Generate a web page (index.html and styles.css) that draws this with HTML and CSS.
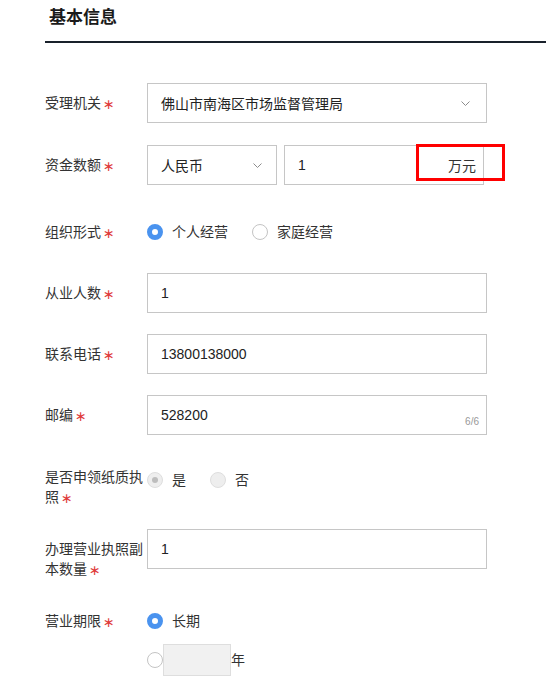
FILE: index.html
```html
<!DOCTYPE html>
<html lang="zh-CN">
<head>
    <meta charset="UTF-8">
    <meta name="viewport" content="width=device-width, initial-scale=1.0">
    <title>基本信息</title>
    <link rel="stylesheet" href="styles.css">
</head>
<body>
    <div class="page">
        <div class="section-head">
            <h2 class="section-title">基本信息</h2>
        </div>

        <form class="form">
            <div class="form-item">
                <label class="form-label">受理机关<span class="req">∗</span></label>
                <div class="select select--wide">
                    <span>佛山市南海区市场监督管理局</span>
                    <svg class="chevron" viewBox="0 0 9 5"><polyline points="0.5,0.5 4.5,4.5 8.5,0.5"/></svg>
                </div>
            </div>

            <div class="form-item form-item--money">
                <label class="form-label">资金数额<span class="req">∗</span></label>
                <div class="select select--currency">
                    <span>人民币</span>
                    <svg class="chevron" viewBox="0 0 9 5"><polyline points="0.5,0.5 4.5,4.5 8.5,0.5"/></svg>
                </div>
                <div class="input input--amount">
                    <span>1</span>
                    <span class="suffix">万元</span>
                    <div class="highlight"></div>
                </div>
            </div>

            <div class="form-item form-item--tight">
                <label class="form-label">组织形式<span class="req">∗</span></label>
                <div class="radios">
                    <div class="radio-option"><span class="radio is-checked"></span>个人经营</div>
                    <div class="radio-option"><span class="radio"></span>家庭经营</div>
                </div>
            </div>

            <div class="form-item form-item--tight">
                <label class="form-label">从业人数<span class="req">∗</span></label>
                <div class="input input--wide">1</div>
            </div>

            <div class="form-item form-item--tight">
                <label class="form-label">联系电话<span class="req">∗</span></label>
                <div class="input input--wide">13800138000</div>
            </div>

            <div class="form-item">
                <label class="form-label">邮编<span class="req">∗</span></label>
                <div class="input input--wide input--count">
                    528200
                    <span class="count">6/6</span>
                </div>
            </div>

            <div class="form-item">
                <label class="form-label">是否申领纸质执<br>照<span class="req">∗</span></label>
                <div class="radios radios--low">
                    <div class="radio-option"><span class="radio is-disabled is-checked"></span>是</div>
                    <div class="radio-option"><span class="radio is-disabled"></span>否</div>
                </div>
            </div>

            <div class="form-item">
                <label class="form-label">办理营业执照副<br>本数量<span class="req">∗</span></label>
                <div class="input input--wide">1</div>
            </div>

            <div class="form-item">
                <label class="form-label">营业期限<span class="req">∗</span></label>
                <div class="radios radios--stack">
                    <div class="radio-option"><span class="radio is-checked"></span>长期</div>
                    <div class="radio-option radio-option--years">
                        <span class="radio"></span>
                        <span class="years-box"></span>年
                    </div>
                </div>
            </div>
        </form>
    </div>
</body>
</html>
```

FILE: styles.css
```css
body {
    margin: 0;
    font-family: "Liberation Sans", "Noto Sans CJK SC", sans-serif;
    font-size: 14px;
    color: #333;
    background-color: #fff;
}
.page {
    padding-left: 45px;
}
.section-head {
    padding: 6px 0 11px 4px;
    border-bottom: 2px solid #19212b;
}
.section-title {
    margin: 0;
    font-size: 17px;
    font-weight: bold;
    line-height: 24px;
    color: #1b1b1b;
}
.form {
    padding-top: 40px;
}
.form-item {
    display: flex;
    align-items: flex-start;
    margin-bottom: 22px;
}
.form-item--money {
    margin-bottom: 27px;
}
.form-item--tight {
    margin-bottom: 21px;
}
.form-label {
    width: 102px;
    flex-shrink: 0;
    padding-top: 10px;
    line-height: 20px;
    color: #333;
}
.req {
    display: inline-block;
    height: 12px;
    margin-left: 2px;
    line-height: 12px;
    vertical-align: -1px;
    color: #e03c3c;
    font-family: "DejaVu Sans", sans-serif;
    font-size: 14px;
}
.select,
.input {
    box-sizing: border-box;
    height: 40px;
    display: flex;
    align-items: center;
    padding: 0 13px;
    border: 1px solid #c6c6c6;
    background-color: #fff;
    color: #222;
}
.select {
    justify-content: space-between;
    padding-right: 16px;
}
.select--wide,
.input--wide {
    width: 340px;
}
.select--currency {
    width: 130px;
    padding-right: 14px;
}
.chevron {
    width: 9px;
    height: 5px;
    fill: none;
    stroke: #8c8c8c;
    stroke-width: 1;
}
.input--amount {
    position: relative;
    width: 200px;
    margin-left: 7px;
    justify-content: space-between;
    padding-right: 7px;
}
.suffix {
    color: #333;
}
.highlight {
    position: absolute;
    left: 131px;
    top: -2px;
    width: 89px;
    height: 37px;
    box-sizing: border-box;
    border: 3px solid #f00;
}
.input--count {
    position: relative;
}
.count {
    position: absolute;
    right: 7px;
    bottom: 7px;
    font-size: 10px;
    color: #999;
}
.radios {
    display: flex;
    padding: 10px 0;
    line-height: 20px;
}
.radios--low {
    padding-top: 13px;
}
.radios--stack {
    flex-direction: column;
    align-items: flex-start;
}
.radio-option {
    display: flex;
    align-items: center;
    margin-right: 24px;
    color: #333;
}
.radio {
    box-sizing: border-box;
    width: 16px;
    height: 16px;
    margin-right: 9px;
    border: 1px solid #c4c4c4;
    border-radius: 50%;
    background-color: #fff;
}
.radio.is-checked {
    border: 5px solid #4a93ef;
}
.radio.is-disabled {
    border: 1px solid #dedede;
    background-color: #eee;
}
.radio.is-disabled.is-checked {
    display: flex;
    align-items: center;
    justify-content: center;
}
.radio.is-disabled.is-checked::after {
    content: "";
    width: 6px;
    height: 6px;
    border-radius: 50%;
    background-color: #bdbdbd;
}
.radio-option--years {
    margin-top: 13px;
}
.radio-option--years .radio {
    margin-right: 0;
}
.years-box {
    box-sizing: border-box;
    width: 68px;
    height: 32px;
    border: 1px solid #dedede;
    background-color: #f1f1f1;
}
```
